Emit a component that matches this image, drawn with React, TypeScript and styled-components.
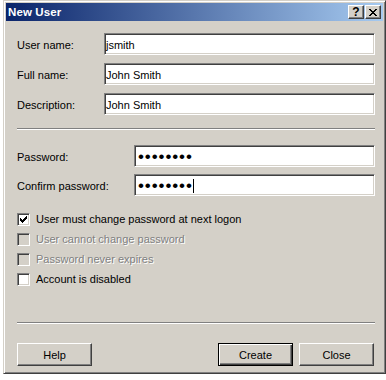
import React from 'react';
import styled, { createGlobalStyle } from 'styled-components';

const GlobalStyle = createGlobalStyle`
  html, body {
    margin: 0;
    padding: 0;
    background: #ffffff;
  }
  * {
    box-sizing: border-box;
  }
`;

const fields = [
  { label: 'User name:', value: 'jsmith' },
  { label: 'Full name:', value: 'John Smith' },
  { label: 'Description:', value: 'John Smith' },
];

const options = [
  { label: 'User must change password at next logon', checked: true, disabled: false },
  { label: 'User cannot change password', checked: false, disabled: true },
  { label: 'Password never expires', checked: false, disabled: true },
  { label: 'Account is disabled', checked: false, disabled: false },
];

function CheckMark() {
  return (
    <svg width="7" height="7" viewBox="0 0 7 7" shapeRendering="crispEdges">
      <path
        d="M6 0h1v1h-1zM5 1h2v1h-2zM0 2h1v1h-1zM4 2h3v1h-3zM0 3h2v1h-2zM3 3h3v1h-3zM0 4h5v1h-5zM1 5h3v1h-3zM2 6h1v1h-1z"
        fill="#000"
      />
    </svg>
  );
}

function CloseGlyph() {
  return (
    <svg width="8" height="7" viewBox="0 0 8 7" shapeRendering="crispEdges">
      <path
        d="M0 0h2v1h-2zM6 0h2v1h-2zM1 1h2v1h-2zM5 1h2v1h-2zM2 2h4v1h-4zM3 3h2v1h-2zM2 4h4v1h-4zM1 5h2v1h-2zM5 5h2v1h-2zM0 6h2v1h-2zM6 6h2v1h-2z"
        fill="#000"
      />
    </svg>
  );
}

export default function App() {
  return (
    <>
      <GlobalStyle />
      <Window>
        <TitleBar>
          <Title>New User</Title>
          <CaptionButtons>
            <CaptionButton type="button">?</CaptionButton>
            <CaptionButton type="button">
              <CloseGlyph />
            </CaptionButton>
          </CaptionButtons>
        </TitleBar>
        <Body>
          <FieldGrid $labelWidth={87} $gap={8}>
            {fields.map((f) => (
              <React.Fragment key={f.label}>
                <Label>{f.label}</Label>
                <Field>{f.value}</Field>
              </React.Fragment>
            ))}
          </FieldGrid>
          <Separator $top={13} $bottom={15} />
          <FieldGrid $labelWidth={117} $gap={7}>
            <Label>Password:</Label>
            <Field>
              <Dots>••••••••</Dots>
            </Field>
            <Label>Confirm password:</Label>
            <Field>
              <Dots>••••••••</Dots>
              <Caret />
            </Field>
          </FieldGrid>
          <Options>
            {options.map((o) => (
              <CheckRow key={o.label} $disabled={o.disabled}>
                <Box $disabled={o.disabled}>{o.checked && <CheckMark />}</Box>
                {o.label}
              </CheckRow>
            ))}
          </Options>
          <Separator $top={33} $bottom={19} />
          <ButtonRow>
            <Button type="button">Help</Button>
            <Spacer />
            <Button type="button" $default>
              Create
            </Button>
            <Button type="button">Close</Button>
          </ButtonRow>
        </Body>
      </Window>
    </>
  );
}

const Window = styled.div`
  width: 383px;
  height: 374px;
  margin-left: 3px;
  padding: 2px;
  display: flex;
  flex-direction: column;
  background-color: #d4d0c8;
  border: 1px solid;
  border-color: #d4d0c8 #404040 #404040 #d4d0c8;
  box-shadow: inset 1px 1px #ffffff, inset -1px -1px #808080;
  font-family: 'Liberation Sans', Arial, sans-serif;
  font-size: 11px;
  color: #000;
`;

const TitleBar = styled.div`
  height: 18px;
  display: flex;
  align-items: center;
  justify-content: space-between;
  padding: 0 2px 0 2px;
  background: linear-gradient(to right, #0a246a, #a6caf0);
`;

const Title = styled.span`
  color: #ffffff;
  font-weight: 700;
  font-size: 11.5px;
  letter-spacing: 0.1px;
`;

const CaptionButtons = styled.div`
  display: flex;
  gap: 1px;
`;

const CaptionButton = styled.button`
  width: 16px;
  height: 14px;
  padding: 0;
  display: flex;
  align-items: center;
  justify-content: center;
  background-color: #d4d0c8;
  border: 1px solid;
  border-color: #ffffff #404040 #404040 #ffffff;
  box-shadow: inset -1px -1px #808080;
  font-family: 'Liberation Sans', Arial, sans-serif;
  font-weight: 700;
  font-size: 12px;
  line-height: 1;
  color: #000;
`;

const Body = styled.div`
  flex: 1;
  padding: 12px 8px 0 11px;
  display: flex;
  flex-direction: column;
`;

const FieldGrid = styled.div<{ $labelWidth: number; $gap: number }>`
  display: grid;
  grid-template-columns: ${(p) => p.$labelWidth}px 1fr;
  row-gap: ${(p) => p.$gap}px;
  align-items: center;
`;

const Label = styled.span`
  padding-top: 2px;
`;

const Field = styled.div`
  height: 22px;
  display: flex;
  align-items: center;
  padding: 1px 0 0 1px;
  background-color: #ffffff;
  border: 1px solid;
  border-color: #808080 #ffffff #ffffff #808080;
  box-shadow: inset 1px 1px #404040, inset -1px -1px #d4d0c8;
  color: #000;
  white-space: nowrap;
`;

const Dots = styled.span`
  padding-left: 2px;
  font-size: 17px;
  letter-spacing: 0.9px;
  line-height: 1;
`;

const Caret = styled.span`
  width: 1px;
  height: 14px;
  background-color: #000;
`;

const Separator = styled.div<{ $top: number; $bottom: number }>`
  height: 2px;
  margin: ${(p) => p.$top}px 0 ${(p) => p.$bottom}px 0;
  border-top: 1px solid #808080;
  border-bottom: 1px solid #ffffff;
`;

const Options = styled.div`
  margin-top: 13px;
  display: flex;
  flex-direction: column;
`;

const CheckRow = styled.label<{ $disabled: boolean }>`
  height: 20px;
  display: flex;
  align-items: center;
  gap: 6px;
  color: ${(p) => (p.$disabled ? '#808080' : '#000')};
  text-shadow: ${(p) => (p.$disabled ? '1px 1px #ffffff' : 'none')};
`;

const Box = styled.span<{ $disabled: boolean }>`
  width: 13px;
  height: 13px;
  display: flex;
  align-items: center;
  justify-content: center;
  background-color: ${(p) => (p.$disabled ? '#d4d0c8' : '#ffffff')};
  border: 1px solid;
  border-color: #808080 #ffffff #ffffff #808080;
  box-shadow: inset 1px 1px #404040, inset -1px -1px #d4d0c8;
`;

const ButtonRow = styled.div`
  display: flex;
  gap: 6px;
  padding-right: 1px;
`;

const Spacer = styled.div`
  flex: 1;
`;

const Button = styled.button<{ $default?: boolean }>`
  width: 75px;
  height: 23px;
  padding: 0;
  background-color: #d4d0c8;
  border: 1px solid;
  border-color: ${(p) => (p.$default ? '#000' : '#ffffff #404040 #404040 #ffffff')};
  box-shadow: ${(p) =>
    p.$default
      ? 'inset 1px 1px #ffffff, inset -1px -1px #404040, inset -2px -2px #808080'
      : 'inset -1px -1px #808080'};
  font-family: 'Liberation Sans', Arial, sans-serif;
  font-size: 11px;
  color: #000;
`;
